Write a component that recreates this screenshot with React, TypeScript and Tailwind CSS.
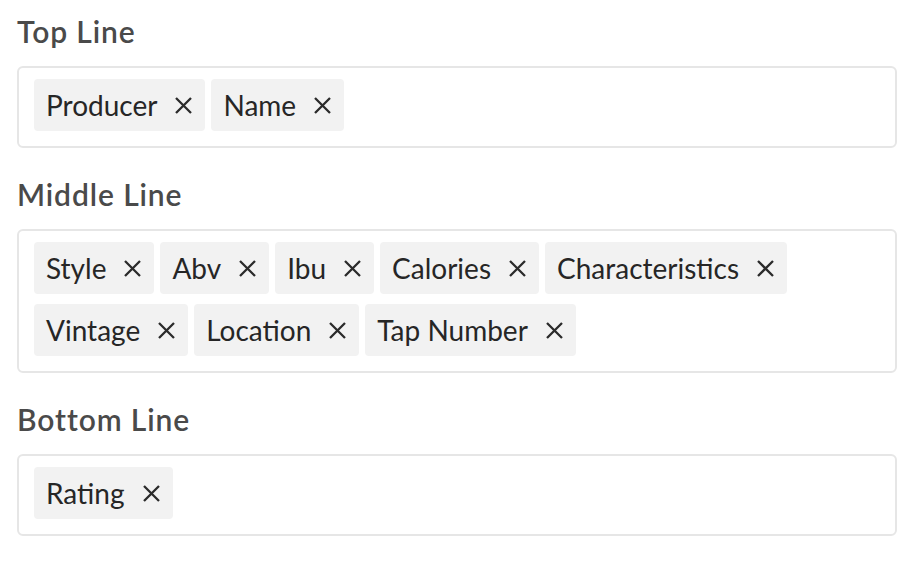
import React from 'react';

const sections: { title: string; tags: string[] }[] = [
  { title: 'Top Line', tags: ['Producer', 'Name'] },
  {
    title: 'Middle Line',
    tags: ['Style', 'Abv', 'Ibu', 'Calories', 'Characteristics', 'Vintage', 'Location', 'Tap Number'],
  },
  { title: 'Bottom Line', tags: ['Rating'] },
];

const CloseIcon = () => (
  <svg width="17" height="17" viewBox="0 0 17 17" className="shrink-0">
    <path d="M1 1L16 16M16 1L1 16" stroke="#2b2b2b" strokeWidth="2.3" />
  </svg>
);

const Tag = ({ label }: { label: string }) => (
  <div className="flex h-[52px] items-center gap-[18px] rounded-[4px] bg-[#f2f2f2] pl-[12px] pr-[13px] text-[28px] text-[#262626]">
    <span className="leading-none">{label}</span>
    <CloseIcon />
  </div>
);

export default function App() {
  return (
    <div
      className="min-h-screen w-[922px] bg-white pl-[17px] pt-[14px]"
      style={{ fontFamily: 'Lato, "Open Sans", sans-serif' }}
    >
      {sections.map((section, i) => (
        <div key={section.title} className={i > 0 ? 'mt-[29px]' : ''}>
          <h2 className="mb-[18px] text-[30px] font-semibold leading-[34px] tracking-[0.9px] text-[#4a4a4a]">
            {section.title}
          </h2>
          <div className="flex w-[880px] flex-wrap gap-x-[6px] gap-y-[10px] rounded-[6px] border-2 border-[#e6e6e6] px-[15px] pb-[15px] pt-[11px]">
            {section.tags.map((tag) => (
              <Tag key={tag} label={tag} />
            ))}
          </div>
        </div>
      ))}
    </div>
  );
}
